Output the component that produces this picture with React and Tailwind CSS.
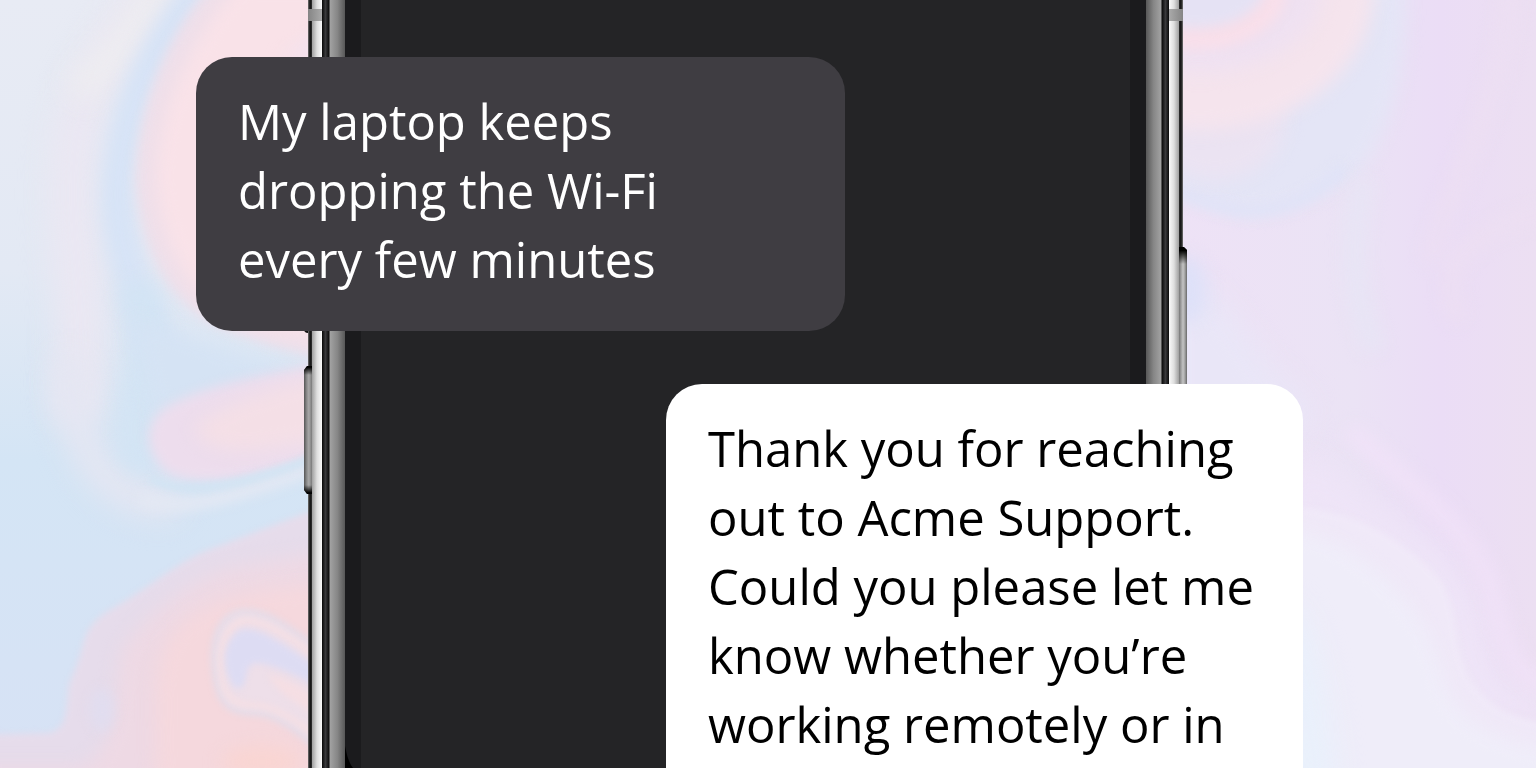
function Blur({ id, amount }) {
  return (
    <filter id={id} filterUnits="userSpaceOnUse" x="-60" y="-60" width="1656" height="888" colorInterpolationFilters="sRGB">
      <feGaussianBlur stdDeviation={amount} />
    </filter>
  );
}

function MarbleBackdrop() {
  return (
    <svg
      className="absolute inset-0 h-full w-full"
      viewBox="0 0 1536 768"
      preserveAspectRatio="xMidYMid slice"
      aria-hidden="true"
    >
      <defs>
        <linearGradient id="baseLeft" x1="0" y1="0" x2="0" y2="1">
          <stop offset="0" stopColor="#e8ebf4" />
          <stop offset="0.35" stopColor="#e3e9f4" />
          <stop offset="0.6" stopColor="#d4e5f5" />
          <stop offset="1" stopColor="#d7e2f5" />
        </linearGradient>
        <linearGradient id="baseRight" x1="0" y1="0" x2="1" y2="0">
          <stop offset="0" stopColor="#eee2f6" />
          <stop offset="0.5" stopColor="#ebe3f5" />
          <stop offset="0.74" stopColor="#ebddf6" />
          <stop offset="1" stopColor="#ecdff2" />
        </linearGradient>
        <Blur id="b3" amount={3} />
        <Blur id="b6" amount={6} />
        <Blur id="b9" amount={9} />
        <Blur id="b14" amount={14} />
        <clipPath id="leftHalf"><rect width="700" height="768" /></clipPath>
        <clipPath id="rightHalf"><rect x="700" width="836" height="768" /></clipPath>
      </defs>

      <g clipPath="url(#leftHalf)">
        <rect width="700" height="768" fill="url(#baseLeft)" />
        <g fill="none" strokeLinecap="round">
          <path d="M170 -30C120 40 80 90 75 150C66 230 88 290 78 400" stroke="#eae7f2" strokeWidth="50" filter="url(#b14)" />
          <path d="M165 -20C145 20 120 50 85 85" stroke="#eeedf0" strokeWidth="30" filter="url(#b14)" />
          <path d="M70 370C72 430 95 500 165 502" stroke="#e4e6f2" strokeWidth="34" filter="url(#b14)" />
          <path d="M206 -20C158 40 126 100 118 180C113 240 140 300 155 345" stroke="#d6e3f6" strokeWidth="32" filter="url(#b9)" />
          <path d="M140 300C165 350 130 400 140 450" stroke="#d3e4f4" strokeWidth="40" filter="url(#b9)" />
        </g>
        <path d="M130 320C170 325 220 350 320 380V400L160 430Z" fill="#d5e3f4" filter="url(#b9)" />
        <path d="M214 -20C160 45 138 110 136 180C140 250 170 300 210 322C250 340 285 352 340 362V-20Z" fill="#eedfea" filter="url(#b6)" />
        <path d="M240 -20C185 45 156 110 155 180C160 250 190 295 230 318L340 345V-20Z" fill="#f9e2e8" filter="url(#b9)" />
        <path d="M340 10C320 35 300 50 280 60H340Z" fill="#f1e2f0" filter="url(#b9)" />
        <path d="M340 358C290 372 205 382 165 408C142 425 145 452 166 472C195 490 265 480 340 445Z" fill="#eddded" filter="url(#b6)" />
        <path d="M340 375C280 382 215 408 195 428C205 458 260 455 340 435Z" fill="#f4dfe6" filter="url(#b9)" />
        <path d="M140 497C175 516 235 498 340 458" fill="none" stroke="#e3e8f3" strokeWidth="14" filter="url(#b6)" />
        <path d="M150 479C190 500 260 482 340 447" fill="none" stroke="#d2e4f3" strokeWidth="7" filter="url(#b3)" />
        <path d="M-20 735L50 733C74 726 63 692 72 677C88 642 79 630 108 611C150 588 175 563 208 550L340 500V800H-20Z" fill="#e6dceb" filter="url(#b3)" />
        <path d="M-20 810V768H80C125 745 112 680 122 650C145 615 190 580 230 568L340 550V810Z" fill="#eed9e4" filter="url(#b9)" />
        <path d="M150 810C165 740 145 680 168 640C190 605 240 585 340 585V810Z" fill="#f5d8dd" filter="url(#b9)" />
        <ellipse cx="102" cy="710" rx="12" ry="22" fill="#e1ddef" filter="url(#b6)" />
        <ellipse cx="262" cy="762" rx="40" ry="16" fill="#f9d5d2" filter="url(#b9)" />
        <path d="M340 662C290 632 268 606 238 612C216 620 211 645 215 675C219 702 228 712 250 713C278 712 300 732 340 768Z" fill="#eedfe9" stroke="#e5dce8" strokeWidth="6" filter="url(#b3)" />
        <path d="M340 671C290 640 268 618 242 621C222 630 219 655 222 678C225 698 234 705 252 705C280 706 300 726 340 752" fill="none" stroke="#f6dfe3" strokeWidth="5" filter="url(#b3)" />
        <path d="M340 682C290 650 262 625 240 630C222 642 221 668 234 687C252 694 240 664 256 663C280 664 310 685 340 696Z" fill="#dddcf3" filter="url(#b3)" />
        <path d="M268 675C285 676 310 694 340 708V725C305 710 280 696 268 675Z" fill="#f5dee3" filter="url(#b3)" />
      </g>

      <g clipPath="url(#rightHalf)">
        <rect x="1170" width="366" height="768" fill="url(#baseRight)" />
        <path d="M1145 -20H1405C1408 80 1385 140 1358 172C1320 200 1280 211 1255 213C1220 212 1190 195 1145 182Z" fill="#e4e5f6" filter="url(#b9)" />
        <path d="M1165 189C1200 198 1230 214 1258 211C1300 207 1320 190 1345 168" fill="none" stroke="#e0e3f7" strokeWidth="13" filter="url(#b6)" />
        <ellipse cx="1215" cy="120" rx="70" ry="60" fill="#ebe3f2" filter="url(#b9)" />
        <ellipse cx="1200" cy="-10" rx="174" ry="140" fill="#f5e4ed" filter="url(#b9)" />
        <ellipse cx="1200" cy="-10" rx="122" ry="83" fill="#efe1f1" filter="url(#b9)" />
        <ellipse cx="1195" cy="-10" rx="92" ry="60" fill="#f8dfea" filter="url(#b6)" />
        <ellipse cx="1195" cy="-14" rx="70" ry="42" fill="#e5e2f4" filter="url(#b6)" />
        <path d="M1365 180C1350 230 1350 290 1375 350" fill="none" stroke="#e7e5f5" strokeWidth="18" filter="url(#b9)" />
        <path d="M1170 285C1230 265 1250 370 1310 400L1300 440H1170Z" fill="#e9e6f7" filter="url(#b14)" />
        <ellipse cx="1187" cy="290" rx="20" ry="34" fill="#dee1f8" filter="url(#b9)" />
        <path d="M1560 210C1470 225 1430 270 1460 320M1430 260C1450 180 1500 120 1510 -10" fill="none" stroke="#eddff2" strokeWidth="14" filter="url(#b9)" />
        <path d="M1290 455C1350 470 1360 495 1420 530S1490 640 1495 660S1530 700 1570 700V720H1440L1280 510Z" fill="#eee4f7" filter="url(#b14)" />
        <path d="M1350 430C1400 480 1480 530 1495 600S1520 680 1570 690" fill="none" stroke="#f1e2f8" strokeWidth="16" filter="url(#b9)" />
        <path d="M1280 508C1350 502 1410 545 1440 580C1462 615 1450 650 1474 685C1495 712 1520 720 1560 724V810H1280Z" fill="#f0e9f8" filter="url(#b3)" />
        <path d="M1280 530C1350 530 1425 600 1440 670C1450 720 1500 745 1560 750V810H1280Z" fill="#efedf9" filter="url(#b9)" />
        <path d="M1280 600C1310 590 1330 690 1340 810H1280Z" fill="#e9f0fb" filter="url(#b14)" />
      </g>
    </svg>
  );
}

function PhoneEdge({ className }) {
  return (
    <div className={`flex h-full w-[53px] shrink-0 ${className}`}>
      <div className="w-1 bg-linear-to-r from-[#777777] via-[#111111] to-[#333333]" />
      <div className="w-[10px] bg-linear-to-r from-[#a0a0a0] via-[#dedede] to-[#fafafa]" />
      <div className="w-[7px] bg-linear-to-r from-[#0a0a0a] via-[#3a3a3c] to-[#0c0c0c]" />
      <div className="w-px bg-[#555555]" />
      <div className="w-[15px] bg-linear-to-r from-[#a2a2a2] via-[#868686] to-[#585858]" />
      <div className="w-4 bg-[#1b1b1d]" />
    </div>
  );
}

function Phone() {
  return (
    <div className="absolute inset-y-0 left-[112px] right-[120px]" aria-hidden="true">
      <div className="flex h-full">
        <PhoneEdge className="" />
        <div className="grow bg-[#242426]" />
        <PhoneEdge className="-scale-x-100" />
      </div>
      <div className="absolute left-0 top-[9px] h-3 w-[14px] bg-linear-to-r from-[#858585] to-[#aaaaaa]" />
      <div className="absolute right-0 top-[9px] h-3 w-[14px] bg-linear-to-l from-[#858585] to-[#aaaaaa]" />
      <div className="absolute -left-1 top-[300px] h-[33px] w-1 rounded-bl-sm bg-[#111111]" />
      <svg className="absolute -left-1 top-[366px] h-32 w-2" viewBox="0 0 8 128">
        <defs>
          <linearGradient id="keyAcross">
            <stop offset="0" stopColor="#555555" />
            <stop offset="0.35" stopColor="#8c8c8c" />
            <stop offset="0.6" stopColor="#a8a8a8" />
            <stop offset="1" stopColor="#7a7a7a" />
          </linearGradient>
          <linearGradient id="keyDown" x1="0" y1="0" x2="0" y2="1">
            <stop offset="0.01" stopColor="#000000" />
            <stop offset="0.07" stopColor="#000000" stopOpacity="0" />
            <stop offset="0.93" stopColor="#000000" stopOpacity="0" />
            <stop offset="0.99" stopColor="#000000" />
          </linearGradient>
        </defs>
        <path d="M0 4L3 0H8V128H3L0 124Z" fill="url(#keyAcross)" />
        <path d="M0 4L3 0H8V128H3L0 124Z" fill="url(#keyDown)" />
      </svg>
      <svg className="absolute -right-1 top-[247px] h-[170px] w-2" viewBox="0 0 8 170">
        <defs>
          <linearGradient id="powerAcross">
            <stop offset="0" stopColor="#777777" />
            <stop offset="0.5" stopColor="#c4c4c4" />
            <stop offset="0.75" stopColor="#a0a0a0" />
            <stop offset="1" stopColor="#686868" />
          </linearGradient>
          <linearGradient id="powerDown" x1="0" y1="0" x2="0" y2="1">
            <stop offset="0.02" stopColor="#000000" />
            <stop offset="0.1" stopColor="#000000" stopOpacity="0" />
          </linearGradient>
        </defs>
        <path d="M0 0H5L8 3V170H0Z" fill="url(#powerAcross)" />
        <path d="M0 0H5L8 3V170H0Z" fill="url(#powerDown)" />
      </svg>
      <svg className="absolute bottom-0 left-[37px] h-[22px] w-2" viewBox="0 0 8 22">
        <path d="M0 0C2 10 4 17 8 22H0Z" fill="#000000" />
      </svg>
    </div>
  );
}

export default function App() {
  return (
    <main className="relative flex h-screen justify-center overflow-hidden bg-[#e8eaf5] pr-[37px] font-['Open_Sans','Noto_Sans',sans-serif] text-[49px] leading-[69px]">
      <MarbleBackdrop />
      <section aria-label="Support conversation" className="relative flex w-full max-w-[1107px] flex-col gap-[53px] pt-[57px]">
        <Phone />
        <p className="relative w-[649px] max-w-full shrink-0 self-start rounded-[36px] bg-[#3f3d42] pb-[37px] pl-[42px] pr-20 pt-[30px] text-white">
          My laptop keeps dropping the Wi-Fi every few minutes
        </p>
        <p className="relative w-[637px] max-w-full grow self-end rounded-t-[36px] bg-white px-[42px] pt-[30px] text-black">
          Thank you for reaching out to Acme Support. Could you please let me know whether you’re working remotely or in
        </p>
      </section>
    </main>
  );
}
